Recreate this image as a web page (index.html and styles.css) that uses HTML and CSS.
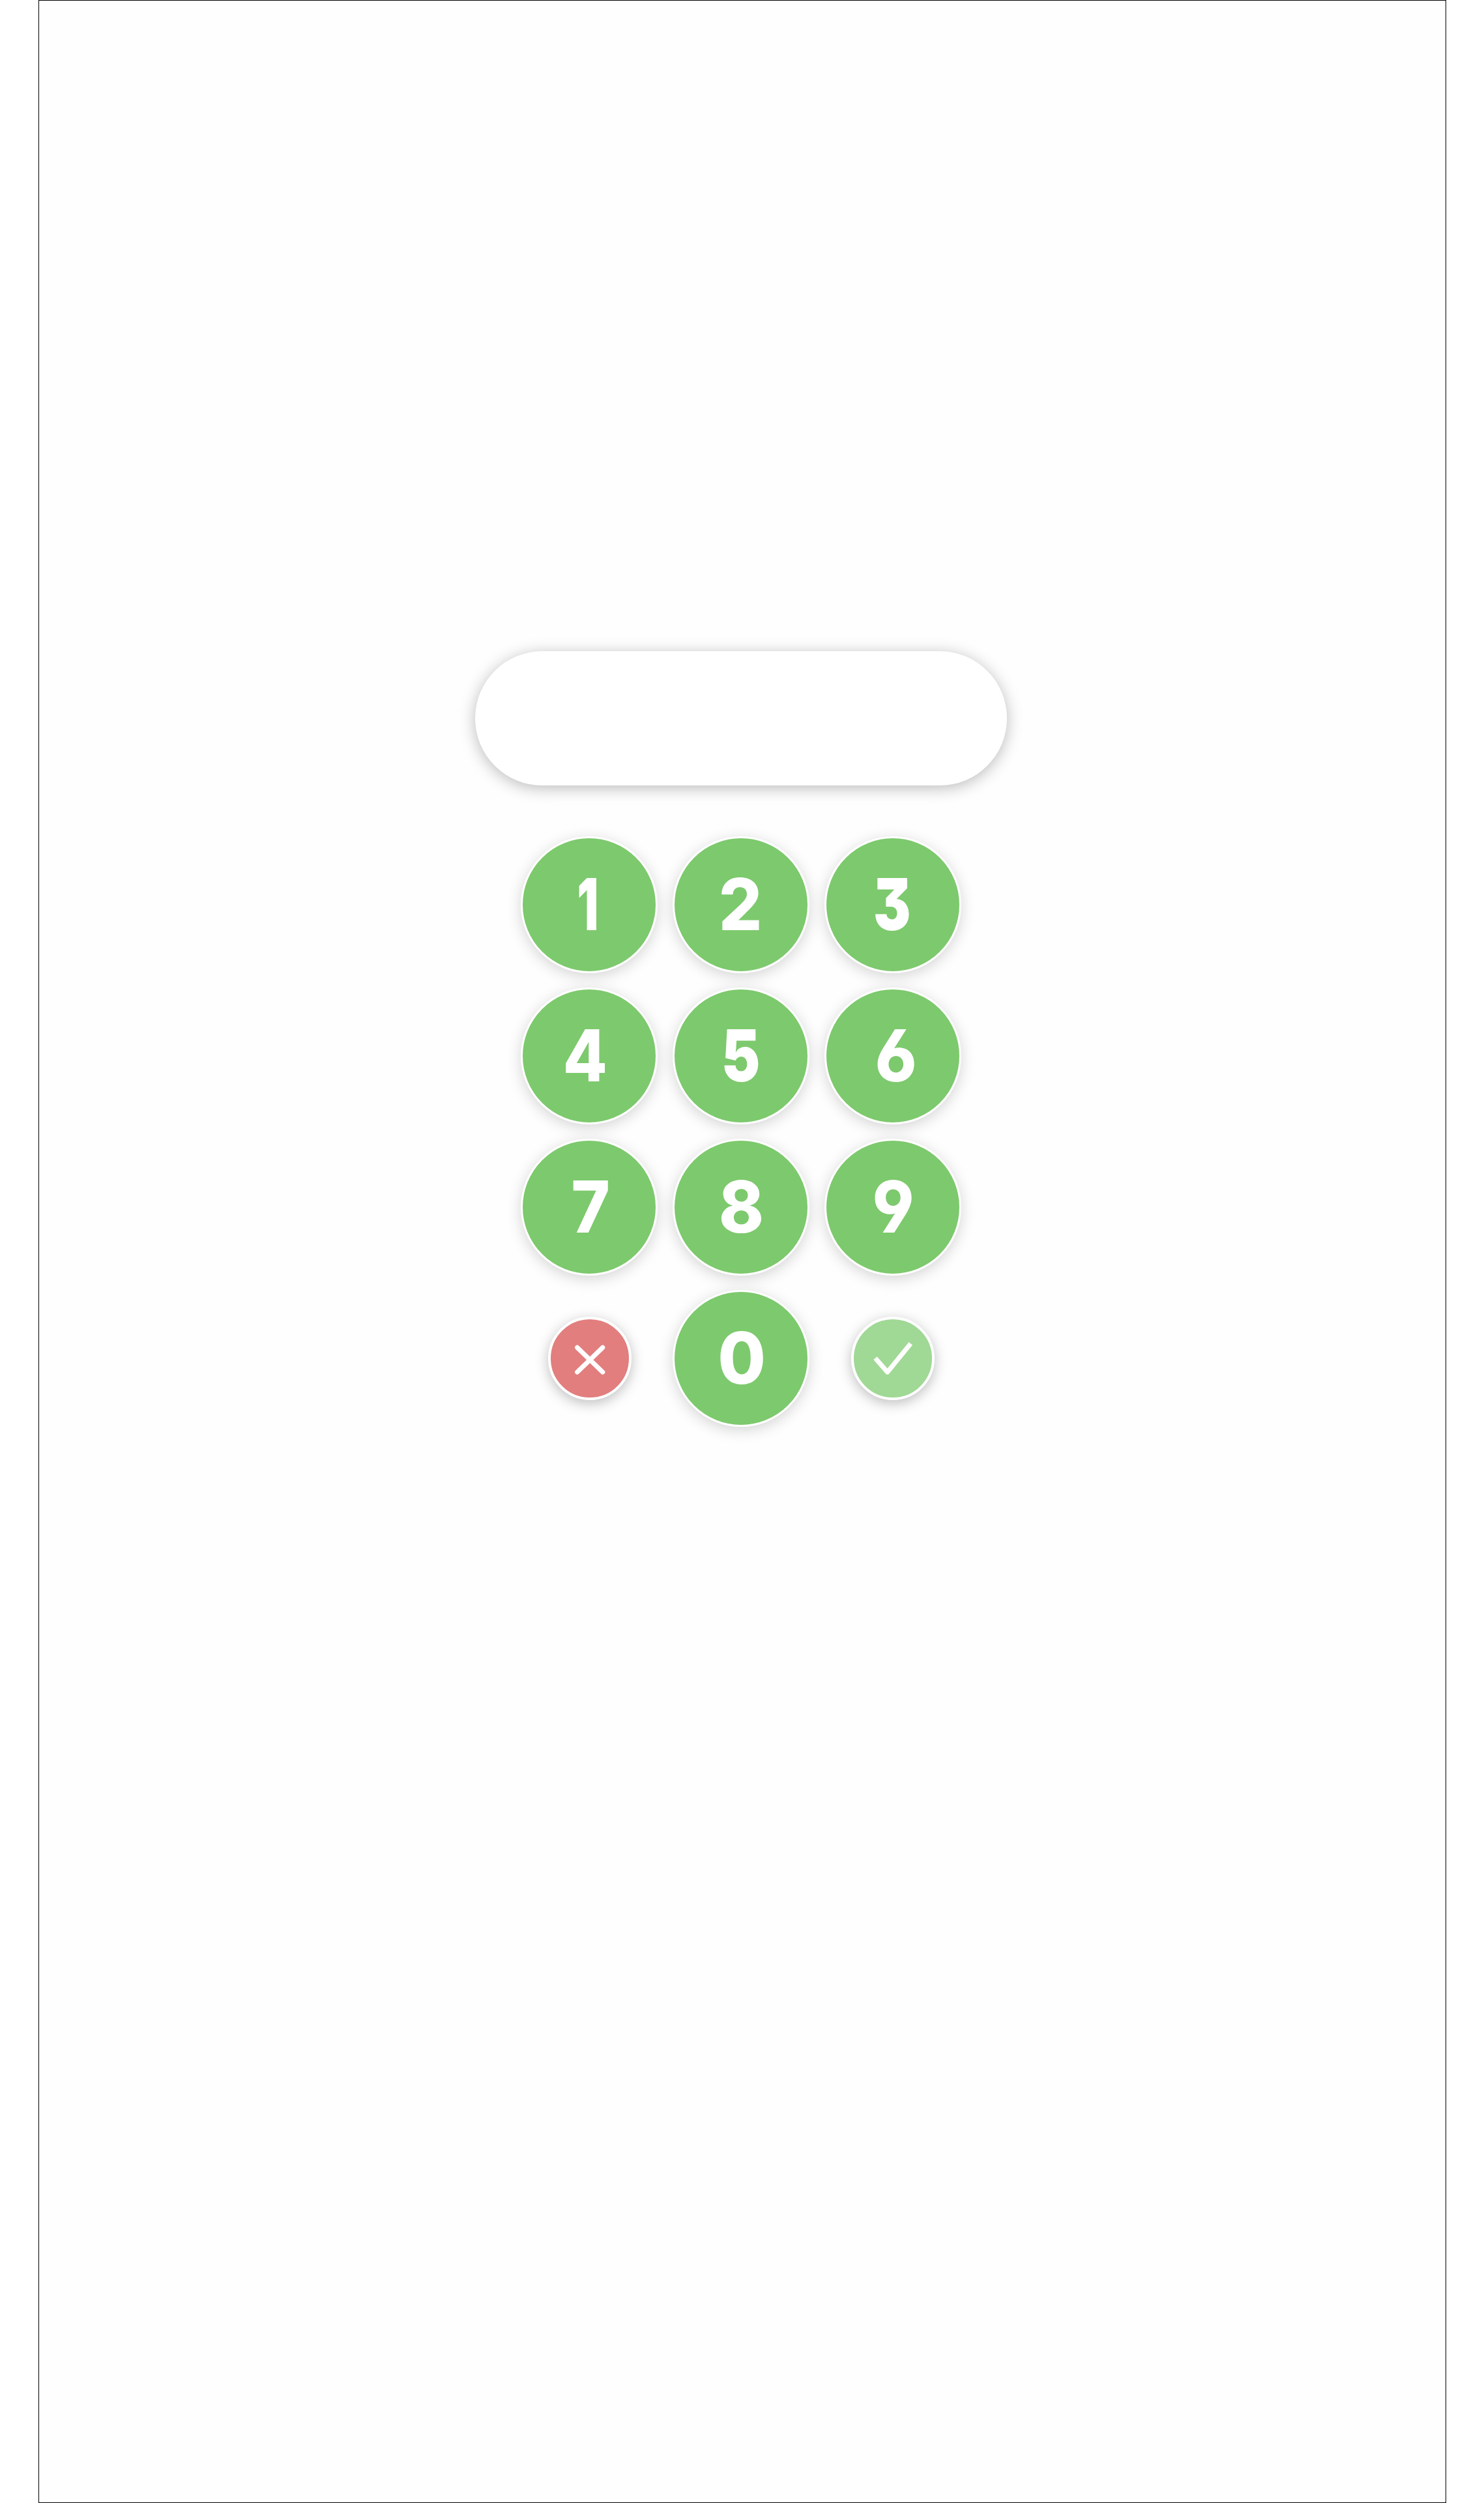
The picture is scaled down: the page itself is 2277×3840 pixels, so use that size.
FILE: index.html
```html
<!DOCTYPE html>
<html lang="en">
<head>
<meta charset="utf-8">
<title>Keypad</title>
<link rel="stylesheet" href="styles.css">
</head>
<body>
<main class="screen">
  <div class="display"></div>
  <div class="keypad">
    <button class="key"><span class="digit one">1</span></button>
    <button class="key"><span class="digit two">2</span></button>
    <button class="key"><span class="digit three">3</span></button>
    <button class="key"><span class="digit four">4</span></button>
    <button class="key"><span class="digit five">5</span></button>
    <button class="key"><span class="digit six">6</span></button>
    <button class="key"><span class="digit seven">7</span></button>
    <button class="key"><span class="digit eight">8</span></button>
    <button class="key"><span class="digit nine">9</span></button>
    <button class="action cancel" aria-label="Cancel">
      <svg class="icon" viewBox="0 0 120 120"><path d="M40.7 43.3 79.7 81M79.7 43.3 40.7 81" stroke-linecap="round"/></svg>
    </button>
    <button class="key"><span class="digit zero">0</span></button>
    <button class="action confirm" aria-label="Confirm">
      <svg class="icon" viewBox="0 0 120 120"><path d="M33 59.7 51.7 81 87.3 37.3" stroke-linejoin="round"/></svg>
    </button>
  </div>
</main>
</body>
</html>
```
FILE: styles.css
```css
* { box-sizing: border-box; }
body { margin: 0; background: #fff; }
.screen {
  width: 2160px;
  height: 3840px;
  margin-left: 59px;
  padding: 998px 0 0 669px;
  border: 1px solid #000;
  background: #fefefe;
}
.display {
  width: 816px;
  height: 206px;
  border-radius: 103px;
  background: #fff;
  box-shadow: 0 4px 24px rgba(0, 0, 0, .27);
}
.keypad {
  display: grid;
  grid-template-columns: repeat(3, 210px);
  grid-auto-rows: 210px;
  gap: 22px 23px;
  margin: 78px 0 0 70px;
  place-items: center;
}
.key, .action {
  display: flex;
  align-items: center;
  justify-content: center;
  padding: 0;
  border-radius: 50%;
  color: #fff;
}
.key {
  width: 210px;
  height: 210px;
  border: 3px solid #fff;
  background: #7dc96d;
  box-shadow: 0 5px 22px rgba(0, 0, 0, .17);
}
.action {
  width: 128px;
  height: 128px;
  border: 4px solid #fff;
  box-shadow: 0 5px 20px rgba(0, 0, 0, .26);
}
.cancel { margin-left: 2px; background: #e27e7e; }
.confirm { background: #a0d895; }
.icon {
  width: 120px;
  height: 120px;
  fill: none;
  stroke: #fff;
  stroke-width: 7.2;
}
.digit {
  display: block;
  font: 800 110px/1 Inter, sans-serif;
  font-feature-settings: "cv03", "cv04", "cv09";
}

/* Optical widths and centring of the digits */
.one { font-weight: 900; transform: translate(-2px, -1px) scaleX(.66); }
.two { transform: translate(-1px, -1px) scaleX(.95); }
.three { font-weight: 900; transform: translate(-1px, -1px) scaleX(.78); }
.four { transform: translate(-6px, -1px) scaleX(.9); }
.five { font-weight: 900; transform: translate(0, -1px) scaleX(.81); }
.six { transform: translate(5px, -1px) scaleX(.93); }
.seven { transform: translate(2px, -1px) scaleX(.92); }
.eight { transform: translate(1px, -1px) scaleX(.95); }
.nine { transform: translate(1px, -1px) scaleX(.93); }
.zero { transform: translate(1px, -1px) scaleX(.97); }
```
